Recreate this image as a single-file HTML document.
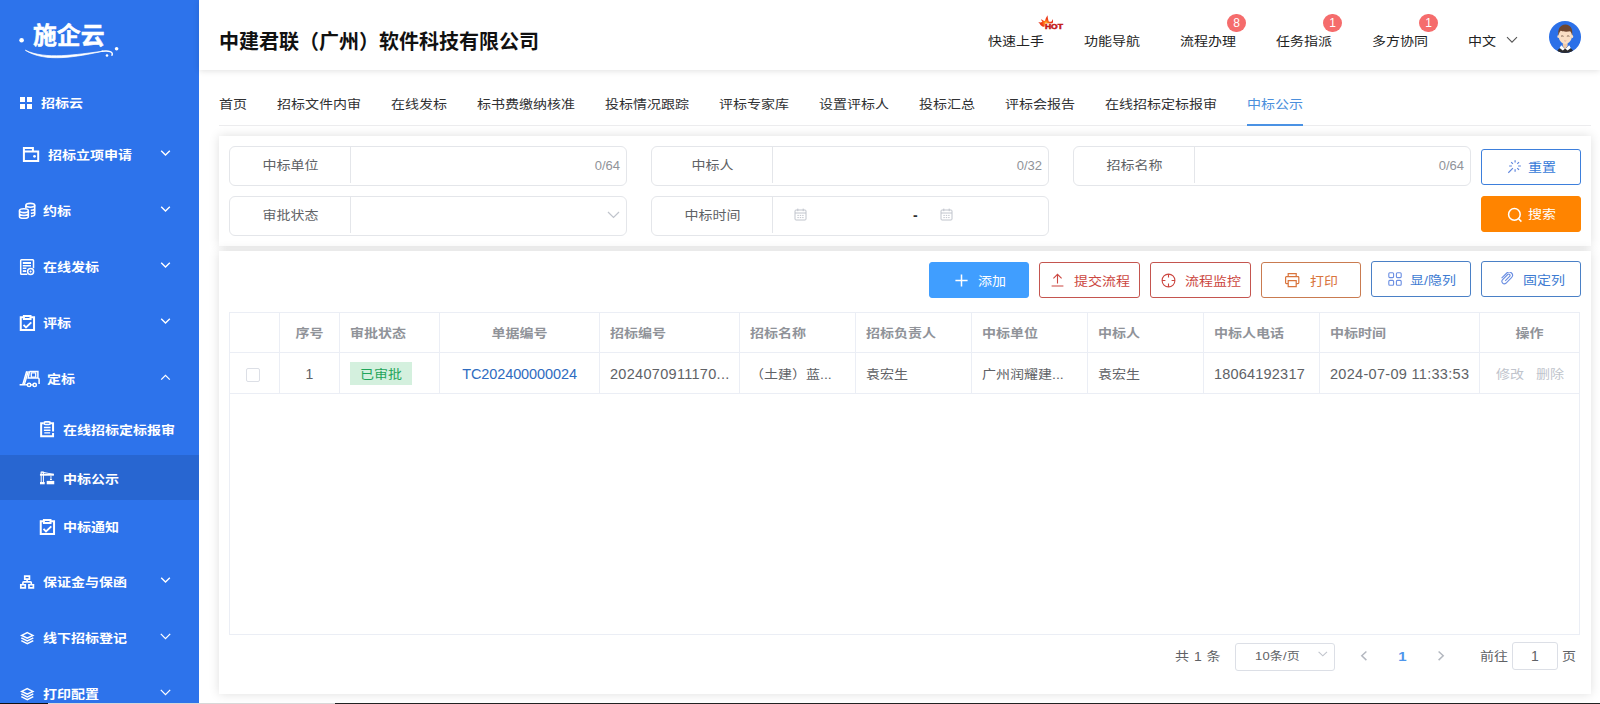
<!DOCTYPE html>
<html lang="zh-CN">
<head>
<meta charset="utf-8">
<title>中标公示</title>
<style>
*{box-sizing:border-box;margin:0;padding:0}
html,body{width:1600px;height:704px;overflow:hidden;background:#fff}
body{font-family:"Liberation Sans","Noto Sans CJK SC",sans-serif;font-size:14px;color:#606266;position:relative}
.abs{position:absolute}
/* sidebar */
#side{position:absolute;left:0;top:0;width:199px;height:704px;background:#2d73eb;color:#fff;overflow:hidden}
#side .it{position:absolute;left:0;width:199px;height:56px;line-height:56px;font-weight:700;font-size:14px;color:#fff;white-space:nowrap}
#side .it .tx{position:absolute;top:0;transform:translateY(.8px) scaleY(.88);transform-origin:50% 50%}
#side .it svg{position:absolute}
#side .act{background:#2866d1}
/* header */
#hdr{position:absolute;left:199px;top:0;width:1401px;height:70px;background:#fff;box-shadow:0 1px 6px rgba(0,0,0,.12)}
#title{position:absolute;left:20px;top:0;height:70px;line-height:84px;font-size:20px;font-weight:700;color:#111;white-space:nowrap}
.nav{position:absolute;top:30px;height:20px;line-height:20px;font-size:14px;color:#222;white-space:nowrap;transform:translateY(1.100px) scaleY(.88);transform-origin:50% 50%;}
.bdg{position:absolute;top:14px;width:18.600px;height:18px;border-radius:9.300px;background:#f56c6c;color:#fff;font-size:12px;line-height:18px;text-align:center}
/* tabs */
.tab{position:absolute;top:94px;height:20px;line-height:20px;font-size:14px;transform:translateY(1px) scaleY(.88);transform-origin:50% 50%;color:#303133;white-space:nowrap}
/* panels */
.panel{position:absolute;background:#fff;box-shadow:0 0 10px rgba(0,0,0,.13)}
.fld{position:absolute;width:398px;height:40px;border:1px solid #e4e6ea;border-radius:6px;background:#fff}
.fld .lb{position:absolute;left:0;top:0;width:121px;height:36px;line-height:36px;transform:translateY(.6px) scaleY(.88);transform-origin:50% 50%;text-align:center;color:#606266;font-size:14px}
.fld .dv{position:absolute;left:120px;top:0;width:1px;height:36px;background:#e4e6ea}
.fld .cnt{position:absolute;right:6px;top:0;height:38px;line-height:37px;font-size:13px;color:#909399}
.btn{position:absolute;height:36px;line-height:36px;border-radius:3px;font-size:14px;white-space:nowrap;border:1px solid}
.btn svg{position:absolute}
.btn span{position:absolute;top:0;transform:translateY(.6px) scaleY(.88);transform-origin:50% 50%;}
/* table */
#tbl{position:absolute;left:10px;top:61px;width:1351px;height:323px;border:1px solid #ebeef5}
.th,.td{position:absolute;height:40px;line-height:40px;font-size:14px;white-space:nowrap;overflow:hidden}
.th{top:0;height:39px;line-height:40px;font-weight:700;color:#909399;transform:translateY(.6px) scaleY(.88);transform-origin:50% 50%;}
.td{top:40px;line-height:42px;color:#606266}
.cj{transform:translateY(.6px) scaleY(.88);transform-origin:50% 50%;}
.dg{font-size:14.500px;transform:translateY(-.5px)}
.vl{position:absolute;top:0;width:1px;height:81px;background:#ebeef5}
.hl{position:absolute;left:0;width:1349px;height:1px;background:#ebeef5}
.pg{position:absolute;font-size:14px;color:#606266;line-height:20px;height:20px;white-space:nowrap;transform:translateY(.6px) scaleY(.88);transform-origin:50% 50%;}
</style>
</head>
<body>
<!-- SIDEBAR -->
<div id="side">
  <svg class="abs" style="left:15px;top:18px" width="110" height="46" viewBox="0 0 110 46">
    <text x="18" y="26.300" font-family="Liberation Sans, Noto Sans CJK SC, sans-serif" font-size="24" font-weight="700" fill="#fff" stroke="#fff" stroke-width=".5" textLength="71.500" lengthAdjust="spacingAndGlyphs">施企云</text>
    <circle cx="6.600" cy="22.300" r="2.300" fill="#fff"/>
    <circle cx="101.600" cy="30.800" r="1.800" fill="#fff"/>
    <circle cx="92" cy="37.500" r="1.300" fill="#fff"/>
    <path d="M10.300 32.200C30 42 62 36.500 88 33.200 62 38.800 30 45 10.300 32.200z" fill="#fff" stroke="#fff" stroke-width=".7" stroke-linejoin="round"/>
    <path d="M87 33.300C94 32.300 98.500 33.800 97 37.200" fill="none" stroke="#fff" stroke-width="1.500" stroke-linecap="round"/>
  </svg>
  <div class="it" style="top:75px">
    <svg style="left:20px;top:21.500px" width="12" height="12" viewBox="0 0 12 12"><rect x="0" y="0" width="5" height="5" fill="#fff"/><rect x="7" y="0" width="5" height="5" fill="#fff"/><rect x="0" y="7" width="5" height="5" fill="#fff"/><rect x="7" y="7" width="5" height="5" fill="#fff"/></svg>
    <span class="tx" style="left:41px">招标云</span>
  </div>

  <div class="it" style="top:127px">
    <svg style="left:22px;top:19px" width="18" height="17" viewBox="0 0 18 17" fill="none" stroke="#fff" stroke-width="2"><path d="M1.900 5.500V2h9v3.500M1.900 5.500h14.300v9.400H1.900z"/><circle cx="12.500" cy="10.300" r="1.400" fill="#fff" stroke="none"/></svg>
    <span class="tx" style="left:48px">招标立项申请</span>
    <svg class="chev" style="left:160px;top:22.5px" width="11" height="7" viewBox="0 0 11 7" fill="none" stroke="#fff" stroke-width="1.400"><path d="M1.200 .8l4.300 4.200 4.300-4.200"/></svg>
  </div>
  <div class="it" style="top:183px">
    <svg style="left:18px;top:19px" width="19" height="18" viewBox="0 0 19 18" fill="none" stroke="#fff" stroke-width="1.600"><ellipse cx="12.300" cy="3.300" rx="4.400" ry="1.900"/><path d="M7.900 3.300v3M16.700 3.300v9.200c0 .9-1.600 1.700-3.800 1.900M16.700 6.400c0 .9-1.700 1.700-3.900 1.900M16.700 9.500c0 .9-1.600 1.700-3.800 1.900"/><ellipse cx="5.900" cy="8.700" rx="4.400" ry="1.900"/><path d="M1.500 8.700v5.700c0 1.100 2 1.900 4.400 1.900s4.400-.8 4.400-1.900V8.700M1.500 11.600c0 1.100 2 1.900 4.400 1.900s4.400-.8 4.400-1.900"/></svg>
    <span class="tx" style="left:43px">约标</span>
    <svg class="chev" style="left:160px;top:22.5px" width="11" height="7" viewBox="0 0 11 7" fill="none" stroke="#fff" stroke-width="1.400"><path d="M1.200 .8l4.300 4.200 4.300-4.200"/></svg>
  </div>
  <div class="it" style="top:239px">
    <svg style="left:19px;top:19px" width="17" height="18" viewBox="0 0 17 18" fill="none" stroke="#fff" stroke-width="1.500"><path d="M8.300 16.200H2.500a.8 .8 0 0 1-.8-.8V2.600a.8 .8 0 0 1 .8-.8h11.200a.8 .8 0 0 1 .8 .8v7.600"/><path d="M3.800 5h8.200" stroke-width="2"/><path d="M3.800 7.700h8.200M3.800 10.300h3.600"/><path d="M3.800 13.100h3.400" stroke-width="1.900"/><circle cx="11.600" cy="13.500" r="3"/><path d="M11.600 12.300l1.200 1.200-1.200 1.200-1.200-1.200z" fill="#fff" stroke="none"/></svg>
    <span class="tx" style="left:43px">在线发标</span>
    <svg class="chev" style="left:160px;top:22.5px" width="11" height="7" viewBox="0 0 11 7" fill="none" stroke="#fff" stroke-width="1.400"><path d="M1.200 .8l4.300 4.200 4.300-4.200"/></svg>
  </div>
  <div class="it" style="top:295px">
    <svg style="left:19px;top:19px" width="17" height="18" viewBox="0 0 17 18" fill="none" stroke="#fff" stroke-width="2"><path d="M4.900 3.300H1.750V16h13.300V3.300H11.500"/><path d="M4.900 2h6.600v3H4.900z"/><path d="M4.500 10.900l2.500 2.500 5.300-5" stroke-width="1.900"/></svg>
    <span class="tx" style="left:43px">评标</span>
    <svg class="chev" style="left:160px;top:22.5px" width="11" height="7" viewBox="0 0 11 7" fill="none" stroke="#fff" stroke-width="1.400"><path d="M1.200 .8l4.300 4.200 4.300-4.200"/></svg>
  </div>
  <div class="it" style="top:351px">
    <svg style="left:19px;top:18px" width="22" height="19" viewBox="0 0 22 19" fill="none" stroke="#fff" stroke-width="1.400"><path d="M.6 15.700h5.600M7.700 2.200L3.700 15.700M9.300 2.200L5.400 15.400"/><path d="M10.500 2.400h8.400v6.300M10.500 2.400L9.200 8.900h9.700c.7 0 1.200.6 1.200 1.300v4.700" stroke-width="1.500"/><path d="M12.300 3.900h4.400v4.200h-4.400z" stroke-width="1.300"/><circle cx="10.100" cy="15.900" r="1.700" stroke-width="1.500"/><circle cx="15.700" cy="15.900" r="1.700" stroke-width="1.500"/><path d="M6.200 15.700h2.200M11.800 15.900h2.200"/></svg>
    <span class="tx" style="left:47px">定标</span>
    <svg class="chev" style="left:160px;top:23px" width="11" height="7" viewBox="0 0 11 7" fill="none" stroke="#fff" stroke-width="1.3"><path d="M1.200 5.600l4.300-4.200 4.300 4.200"/></svg>
  </div>
  <div class="it sub" style="top:405px;height:50px;line-height:50px">
    <svg style="left:40px;top:16px" width="15" height="17" viewBox="0 0 15 17" fill="none" stroke="#fff" stroke-width="2"><path d="M3.600 2.200H1.150V15.250H13.060V12M13.060 10.500V2.200H10.800"/><rect x="4.100" y=".9" width="6.200" height="2.600" rx="1.300" stroke-width="1.700"/><path d="M3.900 6.500h6.600M3.900 9.300h6.600M4.300 11.900h5.800" stroke-width="1.400"/></svg>
    <span class="tx" style="left:63px">在线招标定标报审</span>
  </div>
  <div class="it sub act" style="top:455px;height:45px;line-height:49px">
    <svg style="left:39px;top:16px" width="16" height="14" viewBox="0 0 16 14" fill="#fff" stroke="none"><path d="M1.700 1h1v10.300h-1zM3.900 1h1v10.300h-1z"/><path d="M1.700 .6h3.200v1H1.700z"/><path d="M1 11h4.700v2.300H1z"/><path d="M.95 2.700H14.900v2H.95z"/><path d="M2.500 .4L14.900 2.900v.9L2.500 1.600z"/><path d="M11.500 4.700h.9v3.600h-.9z"/><path d="M11 8h1.900v1h-1.900z"/><path d="M7.700 9.900h7.560v3.400H7.700z"/></svg>
    <span class="tx" style="left:63px">中标公示</span>
  </div>
  <div class="it sub" style="top:500px;height:54px;line-height:54px">
    <svg style="left:39.300px;top:17.500px" width="17" height="18" viewBox="0 0 17 18" fill="none" stroke="#fff" stroke-width="2"><path d="M4.900 3.300H1.750V16h13.300V3.300H11.500"/><path d="M4.900 2h6.600v3H4.900z"/><path d="M4.500 10.900l2.500 2.500 5.300-5" stroke-width="1.900"/></svg>
    <span class="tx" style="left:63px">中标通知</span>
  </div>
  <div class="it" style="top:554px">
    <svg style="left:19px;top:21px" width="16" height="14" viewBox="0 0 16 14" fill="none" stroke="#fff" stroke-width="1.700"><path d="M5.750 1.200h4.700v2.850h-4.700zM1.800 9.750h4.450v3.100H1.800zM9.950 9.750h4.450v3.100H9.950z"/><path d="M8.100 4.900v2M3.900 9V7.700c0-.5 .3-.8 .8-.8h6.800c.5 0 .8 .3 .8 .8V9" stroke-width="1.600"/></svg>
    <span class="tx" style="left:43px">保证金与保函</span>
    <svg class="chev" style="left:160px;top:22.5px" width="11" height="7" viewBox="0 0 11 7" fill="none" stroke="#fff" stroke-width="1.400"><path d="M1.200 .8l4.300 4.200 4.300-4.200"/></svg>
  </div>
  <div class="it" style="top:610px">
    <svg style="left:20px;top:21px" width="15" height="14" viewBox="0 0 15 14" fill="none" stroke="#fff" stroke-width="1.500" stroke-linejoin="miter"><path d="M7.300 1.600l5.600 2.800-5.600 2.800-5.600-2.800z"/><path d="M1.300 6.900l6 3 6-3M1.300 9.700l6 3 6-3"/></svg>
    <span class="tx" style="left:43px">线下招标登记</span>
    <svg class="chev" style="left:160px;top:23px" width="11" height="7" viewBox="0 0 11 7" fill="none" stroke="#fff" stroke-width="1.3"><path d="M.8 .9l4.7 4.700L10.200 .9"/></svg>
  </div>
  <div class="it" style="top:666px">
    <svg style="left:20px;top:21px" width="15" height="14" viewBox="0 0 15 14" fill="none" stroke="#fff" stroke-width="1.500" stroke-linejoin="miter"><path d="M7.300 1.600l5.600 2.800-5.600 2.800-5.600-2.800z"/><path d="M1.300 6.900l6 3 6-3M1.300 9.700l6 3 6-3"/></svg>
    <span class="tx" style="left:43px">打印配置</span>
    <svg class="chev" style="left:160px;top:23px" width="11" height="7" viewBox="0 0 11 7" fill="none" stroke="#fff" stroke-width="1.3"><path d="M.8 .9l4.7 4.700L10.200 .9"/></svg>
  </div>
</div>

<!-- HEADER -->
<div id="hdr">
  <div id="title">中建君联（广州）软件科技有限公司</div>
</div>
<div class="nav" style="left:988px">快速上手</div>
<div class="nav" style="left:1084px">功能导航</div>
<div class="nav" style="left:1180px">流程办理</div>
<div class="nav" style="left:1276px">任务指派</div>
<div class="nav" style="left:1372px">多方协同</div>
<div class="nav" style="left:1468px">中文</div>
<div class="bdg" style="left:1227.200px">8</div>
<div class="bdg" style="left:1323.200px">1</div>
<div class="bdg" style="left:1419.200px">1</div>
<!-- HOT icon -->
<svg class="abs" style="left:1036px;top:13px" width="30" height="18" viewBox="0 0 30 18">
  <defs><radialGradient id="fg" cx="10" cy="10" r="7" gradientUnits="userSpaceOnUse"><stop offset="0" stop-color="#ffd84a"/><stop offset=".25" stop-color="#ff7a18"/><stop offset=".6" stop-color="#f03a14"/><stop offset="1" stop-color="#e02a12"/></radialGradient></defs>
  <path d="M2.200 9.100C4 9.600 5.400 9.400 6.400 8.800 5.600 7.800 5.200 6.800 5.300 5.900 6.400 7 7.600 7.800 9 8 9.400 6 10.400 4 11.500 2.200 11.700 4.400 12 6.600 12.800 8.400 13.800 8.800 14.800 8.800 15.600 8.400 16.200 7.800 16.600 7 16.700 6.100 17.200 7.400 17.200 8.800 16.600 10.200L9 10.400 8.600 13.600 7.500 13.800C5.800 13.200 4.800 12.400 4.200 11.400 3.600 10.400 3 9.600 2.200 9.100z" fill="url(#fg)"/>
  <text x="8.900" y="15.900" font-family="Liberation Sans, sans-serif" font-size="7" font-weight="700" fill="#c41a1a" stroke="#c41a1a" stroke-width=".55" textLength="18" lengthAdjust="spacingAndGlyphs">HOT</text>
</svg>
<svg class="abs" style="left:1506px;top:36px" width="12" height="8" viewBox="0 0 12 8" fill="none" stroke="#555" stroke-width="1.100"><path d="M1 1.200l5 5 5-5"/></svg>
<!-- avatar -->
<svg class="abs" style="left:1549.200px;top:21px" width="32" height="32" viewBox="0 0 32 32">
  <defs><clipPath id="avc"><circle cx="16" cy="16" r="16"/></clipPath></defs>
  <g clip-path="url(#avc)">
    <rect width="32" height="32" fill="#2b70e8"/>
    <path d="M7.500 32C8.200 28.600 10.800 26.800 13 26.200h6.400C21.600 26.800 24.200 28.600 24.900 32z" fill="#2b2b2f"/>
    <path d="M13.800 20.500h4.800v4.600l-2.400 2.800-2.400-2.800z" fill="#f0c9a9"/>
    <path d="M12.200 24.200l4 3.700 4-3.700 1.600 2.900-3.200 2.300-2.400-2-2.400 2-3.200-2.300z" fill="#fff"/>
    <path d="M9.400 13.500C9.400 18.400 12 22.900 16.200 22.900 20.400 22.900 23.200 18.400 23.200 13.500 23.200 9.200 20 7.500 16.200 7.500 12.400 7.500 9.400 9.200 9.400 13.500z" fill="#f9dec4"/>
    <ellipse cx="9.300" cy="15.600" rx=".9" ry="1.500" fill="#f9dec4"/><ellipse cx="23.300" cy="15.600" rx=".9" ry="1.500" fill="#f9dec4"/>
    <path d="M9.500 14.800C8.400 8.600 11 3.400 16.400 3.400 21.800 3.400 24.200 8.600 23.100 14.800 22.700 12.600 22.100 11 21.100 10.200 18.200 11 13.800 10.700 11.600 9.800 10.500 10.900 9.900 12.700 9.500 14.800z" fill="#6d4630"/>
    <path d="M12 15.300c.8-.5 1.700-.5 2.500 0M17.900 15.300c.8-.5 1.700-.5 2.500 0" stroke="#5b4234" stroke-width=".8" fill="none"/>
    <path d="M15.200 19.700c.7.400 1.400.4 2.100 0" stroke="#e8a090" stroke-width=".8" fill="none"/>
  </g>
</svg>

<!-- TABS -->
<div class="tab" style="left:219px">首页</div>
<div class="tab" style="left:277px">招标文件内审</div>
<div class="tab" style="left:391px">在线发标</div>
<div class="tab" style="left:477px">标书费缴纳核准</div>
<div class="tab" style="left:605px">投标情况跟踪</div>
<div class="tab" style="left:719px">评标专家库</div>
<div class="tab" style="left:819px">设置评标人</div>
<div class="tab" style="left:919px">投标汇总</div>
<div class="tab" style="left:1005px">评标会报告</div>
<div class="tab" style="left:1105px">在线招标定标报审</div>
<div class="tab" style="left:1247px;color:#4b8fdc">中标公示</div>
<div class="abs" style="left:219px;top:125px;width:1372px;height:1px;background:#ececee"></div>
<div class="abs" style="left:1247px;top:124px;width:56px;height:2px;background:#4a92e4"></div>

<!-- FILTER PANEL -->
<div class="panel" id="fp" style="left:219px;top:136px;width:1372px;height:110px">
  <div class="fld" style="left:10px;top:10px"><div class="lb">中标单位</div><div class="dv"></div><div class="cnt">0/64</div></div>
  <div class="fld" style="left:432px;top:10px"><div class="lb">中标人</div><div class="dv"></div><div class="cnt">0/32</div></div>
  <div class="fld" style="left:854px;top:10px"><div class="lb">招标名称</div><div class="dv"></div><div class="cnt">0/64</div></div>
  <div class="fld" style="left:10px;top:60px"><div class="lb">审批状态</div><div class="dv"></div><svg class="abs" style="left:377px;top:14px" width="13" height="8" viewBox="0 0 13 8" fill="none" stroke="#c0c4cc" stroke-width="1.200"><path d="M1 1l5.500 5.500L12 1"/></svg></div>
  <div class="fld" style="left:432px;top:60px"><div class="lb">中标时间</div><div class="dv"></div><svg class="abs" style="left:142px;top:11px" width="13" height="13" viewBox="0 0 13 13" fill="none" stroke="#c0c4cc" stroke-width="1"><rect x="1" y="2" width="11" height="10" rx="1"/><path d="M1 5h11M3.800 .6v2.600M9.200 .6v2.600M3.400 7.400h1.400M5.800 7.400h1.400M8.200 7.400h1.400M3.400 9.600h1.400M5.800 9.600h1.400M8.200 9.600h1.400"/></svg><div class="abs" style="left:261px;top:0;line-height:37px;color:#303133;font-size:14px;font-weight:700">-</div><svg class="abs" style="left:288px;top:11px" width="13" height="13" viewBox="0 0 13 13" fill="none" stroke="#c0c4cc" stroke-width="1"><rect x="1" y="2" width="11" height="10" rx="1"/><path d="M1 5h11M3.800 .6v2.600M9.200 .6v2.600M3.400 7.400h1.400M5.800 7.400h1.400M8.200 7.400h1.400M3.400 9.600h1.400M5.800 9.600h1.400M8.200 9.600h1.400"/></svg></div>
  <div class="btn" style="left:1262px;top:13px;width:100px;line-height:34px;border-color:#3d7fdc;color:#3579d8;background:#fff">
    <svg style="left:26px;top:10px" width="15" height="15" viewBox="0 0 15 15" fill="none" stroke="#5f86de" stroke-width="1.200"><path d="M7.100 .2v2.400M7.100 9.300v2.400M1.100 6h2.800M10.100 6h2.800M3.200 2.200l1.700 1.700M9.300 3.900l1.700-1.700M9.300 8.100l1.700 1.700M4.900 8.200L.3 12.800"/></svg>
    <span style="left:46px">重置</span>
  </div>
  <div class="btn" style="left:1262px;top:60px;width:100px;line-height:34px;border-color:#ff8400;color:#fff;background:#ff8400">
    <svg style="left:25px;top:10px" width="16" height="16" viewBox="0 0 16 16" fill="none" stroke="#fff" stroke-width="1.500"><circle cx="7.400" cy="7.400" r="5.800"/><path d="M11.600 11.800l2.800 2.800"/></svg>
    <span style="left:46px">搜索</span>
  </div>
</div>

<!-- TABLE PANEL -->
<div class="panel" id="tp" style="left:219px;top:251px;width:1372px;height:443px">
  <div class="btn" style="left:710px;top:11px;width:100px;border-color:#409eff;background:#409eff;color:#fff">
    <svg style="left:25px;top:11px" width="13" height="13" viewBox="0 0 13 13" fill="none" stroke="#fff" stroke-width="1.500"><path d="M6.500 .4v12.200M.4 6.500h12.200"/></svg>
    <span style="left:48px">添加</span>
  </div>
  <div class="btn" style="left:820px;top:11px;width:101px;border-color:#c4554f;color:#cb4640;background:#fff">
    <svg style="left:11px;top:10px" width="13" height="14" viewBox="0 0 13 14" fill="none" stroke="#cb4640" stroke-width="1.100"><path d="M.6 13h11.800M6.500 10.600V1.400M2.400 5.400l4.100-4.100 4.100 4.100"/></svg>
    <span style="left:34px">提交流程</span>
  </div>
  <div class="btn" style="left:931px;top:11px;width:101px;border-color:#c4554f;color:#cb4640;background:#fff">
    <svg style="left:10px;top:10px" width="15" height="15" viewBox="0 0 15 15" fill="none" stroke="#cb4640" stroke-width="1.100"><circle cx="7.500" cy="7.500" r="6.400"/><path d="M7.500 1v3.400M7.500 10.600V14M1 7.500h3.400M10.600 7.500H14"/></svg>
    <span style="left:34px">流程监控</span>
  </div>
  <div class="btn" style="left:1042px;top:11px;width:100px;border-color:#c97b50;color:#d9743c;background:#fff">
    <svg style="left:23px;top:10px" width="15" height="15" viewBox="0 0 15 15" fill="none" stroke="#d9743c" stroke-width="1.200"><path d="M3.200 3.700V.7h8v3M3.200 10.600H1.400a.8 .8 0 0 1-.8-.8V4.500a.8 .8 0 0 1 .8-.8h11.600a.8 .8 0 0 1 .8 .8v5.300a.8 .8 0 0 1-.8 .8h-1.800"/><path d="M3.200 7.600h8v6h-8z"/></svg>
    <span style="left:48px">打印</span>
  </div>
  <div class="btn" style="left:1152px;top:10px;width:100px;border-color:#4a80c6;color:#3d7bd2;background:#fff">
    <svg style="left:16px;top:10px" width="14" height="14" viewBox="0 0 14 14" fill="none" stroke="#6a8ee2" stroke-width="1.100"><rect x=".8" y=".8" width="4.800" height="4.800" rx="1"/><rect x="8.400" y=".8" width="4.800" height="4.800" rx="1"/><rect x=".8" y="8.400" width="4.800" height="4.800" rx="1"/><rect x="8.400" y="8.400" width="4.800" height="4.800" rx="1"/></svg>
    <span style="left:38px">显/隐列</span>
  </div>
  <div class="btn" style="left:1262px;top:10px;width:100px;border-color:#4a80c6;color:#3d7bd2;background:#fff">
    <svg style="left:17px;top:10px" width="15" height="14" viewBox="0 0 15 14" fill="none" stroke="#6a8ee2" stroke-width="1.100"><path d="M6.200 8.800l4.400-4.400a1.300 1.300 0 0 0-1.900-1.900L3.400 7.800a2.500 2.500 0 0 0 3.500 3.500l5.600-5.600a3.300 3.300 0 0 0-4.700-4.700L2.600 6.200"/></svg>
    <span style="left:41px">固定列</span>
  </div>
  <div id="tbl">
    <div class="abs" style="left:0;top:0;width:1349px;height:40px;background:#fff"></div>
    <div class="hl" style="top:39px"></div>
    <div class="hl" style="top:80px"></div>
    <div class="vl" style="left:49px"></div>
    <div class="vl" style="left:109px"></div>
    <div class="vl" style="left:209px"></div>
    <div class="vl" style="left:369px"></div>
    <div class="vl" style="left:509px"></div>
    <div class="vl" style="left:625px"></div>
    <div class="vl" style="left:741px"></div>
    <div class="vl" style="left:857px"></div>
    <div class="vl" style="left:973px"></div>
    <div class="vl" style="left:1089px"></div>
    <div class="vl" style="left:1249px"></div>
    <div class="th" style="left:50px;width:59px;text-align:center">序号</div>
    <div class="th" style="left:120px">审批状态</div>
    <div class="th" style="left:210px;width:159px;text-align:center">单据编号</div>
    <div class="th" style="left:380px">招标编号</div>
    <div class="th" style="left:520px">招标名称</div>
    <div class="th" style="left:636px">招标负责人</div>
    <div class="th" style="left:752px">中标单位</div>
    <div class="th" style="left:868px">中标人</div>
    <div class="th" style="left:984px">中标人电话</div>
    <div class="th" style="left:1100px">中标时间</div>
    <div class="th" style="left:1250px;width:99px;text-align:center">操作</div>
    <div class="abs" style="left:16px;top:55px;width:14px;height:14px;border:1px solid #dcdfe6;border-radius:2px;background:#fff"></div>
    <div class="td" style="left:50px;width:59px;text-align:center">1</div>
    <div class="abs" style="left:120px;top:49px;width:62px;height:23px;background:#d4f0de"></div><div class="abs" style="left:120px;top:49px;width:62px;height:24px;line-height:24px;color:#1fa55a;font-size:14px;text-align:center;transform:translateY(.6px) scaleY(.88);transform-origin:50% 50%;">已审批</div>
    <div class="td dg" style="left:210px;width:159px;text-align:center;color:#2f6cc0;letter-spacing:-.1px">TC202400000024</div>
    <div class="td dg" style="left:380px;letter-spacing:.3px">2024070911170...</div>
    <div class="td cj" style="left:520px">（土建）蓝...</div>
    <div class="td cj" style="left:636px">袁宏生</div>
    <div class="td cj" style="left:752px">广州润耀建...</div>
    <div class="td cj" style="left:868px">袁宏生</div>
    <div class="td dg" style="left:984px;letter-spacing:.2px">18064192317</div>
    <div class="td dg" style="left:1100px;letter-spacing:.3px">2024-07-09 11:33:53</div>
    <div class="td cj" style="left:1266px;color:#c0c4cc">修改</div>
    <div class="td cj" style="left:1306px;color:#c0c4cc">删除</div>
  </div>
  <!-- pagination -->
  <div class="pg" style="left:956px;top:395px;word-spacing:1px">共 1 条</div>
  <div class="abs" style="left:1016px;top:392px;width:100px;height:28px;border:1px solid #dcdfe6;border-radius:3px;background:#fff"></div>
  <div class="pg" style="left:1036px;top:395px;font-size:13px;letter-spacing:.2px">10条/页</div>
  <svg class="abs" style="left:1099px;top:400px" width="10" height="7" viewBox="0 0 10 7" fill="none" stroke="#c0c4cc" stroke-width="1.100"><path d="M.6 .8l4.200 4 4.200-4"/></svg>
  <svg class="abs" style="left:1141px;top:399px" width="8" height="12" viewBox="0 0 8 12" fill="none" stroke="#b4b8c0" stroke-width="1.500"><path d="M6.400 1.500L1.800 5.700l4.600 4.400"/></svg>
  <div class="pg" style="left:1173.500px;top:395px;width:20px;text-align:center;color:#4f96ec;font-weight:700;font-size:15px">1</div>
  <svg class="abs" style="left:1218px;top:399px" width="8" height="12" viewBox="0 0 8 12" fill="none" stroke="#b4b8c0" stroke-width="1.500"><path d="M1.600 1.500l4.600 4.200-4.600 4.400"/></svg>
  <div class="pg" style="left:1261px;top:395px">前往</div>
  <div class="abs" style="left:1293px;top:391px;width:46px;height:28px;border:1px solid #dcdfe6;border-radius:3px;background:#fff;text-align:center;line-height:27px;font-size:14px;color:#606266">1</div>
  <div class="pg" style="left:1343px;top:395px">页</div>
</div>
<div class="abs" style="left:0;top:703px;width:48px;height:1px;background:#111"></div>
<div class="abs" style="left:48px;top:703px;width:287px;height:1px;background:#d8d8d8"></div>
<div class="abs" style="left:335px;top:703px;width:1265px;height:1px;background:#222"></div>
</body>
</html>
